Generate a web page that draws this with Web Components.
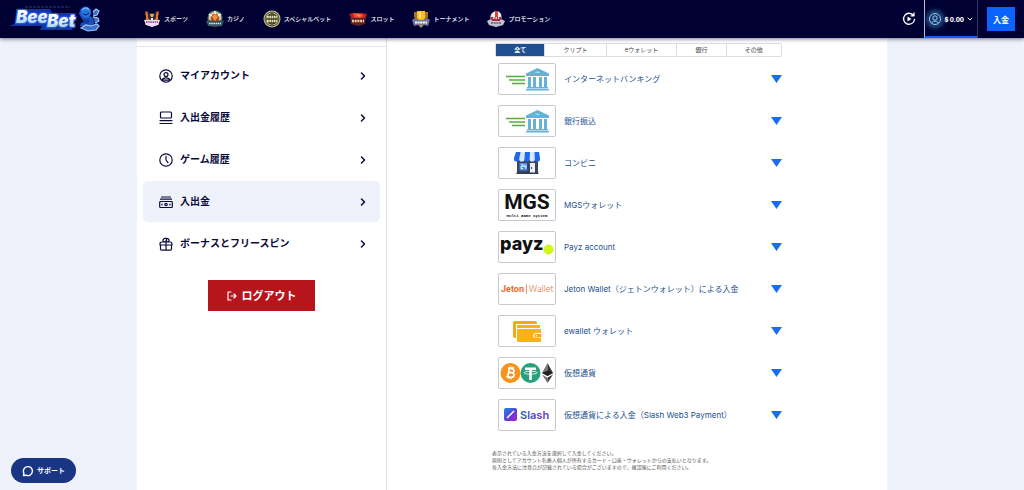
<!DOCTYPE html>
<html lang="ja">
<head>
<meta charset="utf-8">
<meta name="viewport" content="width=device-width, initial-scale=1">
<title>BeeBet 入出金</title>
<style>
html{background:#eff2fa}
body{margin:0;font-family:Inter,"Noto Sans CJK JP",sans-serif;color:#0b0b3b}
</style>
</head>
<body>
<bee-app></bee-app>
<script>
const define = (name, html, setup) => {
  const tpl = document.createElement('template');
  tpl.innerHTML = html;
  customElements.define(name, class extends HTMLElement {
    constructor() {
      super();
      this.attachShadow({ mode: 'open' }).append(tpl.content.cloneNode(true));
    }
    connectedCallback() { if (setup) setup.call(this, this.shadowRoot); }
  });
};

const line = 'fill="none" stroke="currentColor" stroke-linecap="round" stroke-linejoin="round"';

const badges = {
  sports: `<path d="M2 2l3 1 4 4 4-4 3-1-1 5 1 8-4-2H6l-4 2 1-8z" fill="#e07a1f"/><path d="M3 1l11 14M15 1L4 15" stroke="#a9552c" stroke-width="1.5"/><path d="M5 3h8v5l-4 4-4-4z" fill="#252b4e"/><path d="M7 4h4l-1 3H8z" fill="#f0b23a"/><path d="M8 8h2v2H8z" fill="#fff"/><path d="M1 10h16l-2 5-6 2-6-2z" fill="#eadff0"/><path d="M3 12h12" stroke="#783c91" stroke-width="1.6" stroke-dasharray="1.5 .7"/>`,
  casino: `<circle cx="9" cy="8" r="7.500" fill="#588464"/><circle cx="9" cy="8" r="6" fill="#e9dcc5"/><circle cx="9" cy="8" r="4.4" fill="#b9421f"/><path d="M9 3l3 4-3 4-3-4z" fill="#ee933f"/><path d="M3 4l3 2M15 4l-3 2M9 1v3" stroke="#fff" stroke-width="1.4"/><path d="M0 11l3-1 6 1 6-1 3 1-2 5-7 1-7-1z" fill="#35545b"/><path d="M3 13.500h12" stroke="#d8ece3" stroke-width="1.7" stroke-dasharray="1.6 .6"/>`,
  special: `<circle cx="9" cy="9" r="8.5" fill="#cac391"/><circle cx="9" cy="9" r="7" fill="none" stroke="#3d432f"/><circle cx="9" cy="9" r="5.8" fill="#383d2c"/><path d="M4 7h10M4 11h10" stroke="#ece5b0" stroke-width="2.4" stroke-dasharray="1.7 .6"/><path d="M9 2v3M9 13v3" stroke="#5c5c3a" stroke-width="1.5"/>`,
  slot: `<path d="M0 4l5-1h8l5 1-2 5H3z" fill="#bd231c"/><path d="M4 3l8 1 3 2-4 2-6-1z" fill="#ee4e37"/><path d="M7 4l5 1-2 2" fill="#fa9b6a"/><path d="M1 8h16l-1 6-7 2-7-2z" fill="#5c241d"/><path d="M3 11h12" stroke="#edc7a7" stroke-width="2.4" stroke-dasharray="2 .7"/>`,
  tournament: `<path d="M2 2h14v5l-3 4H5L2 7z" fill="#a76f32"/><path d="M5 1h8v7l-3 3H8L5 8z" fill="#ffbd20"/><path d="M7 2h2v6H7z" fill="#ffe986"/><path d="M0 10l3-2 2 2h8l2-2 3 2-2 6-4-1-3 3-3-3-4 1z" fill="#70749d"/><path d="M3 12.5h12" stroke="#fff" stroke-width="2" stroke-dasharray="2 .6"/><path d="M7 15h4l-2 2z" fill="#e48d27"/>`,
  promo: `<circle cx="9" cy="7" r="5.6" fill="#ded9dc"/><path d="M5 4l3-3h3l3 3-2 3H6z" fill="#f6f4f3"/><path d="M8 1h3v6H8z" fill="#d4433d"/><path d="M4 7h10v4H4z" fill="#ac2b35"/><path d="M6 8h6" stroke="#fff" stroke-width="1.5" stroke-dasharray="1.5 1"/><path d="M0 11l4-2 1 2h8l1-2 4 2-2 4-7 2-7-2z" fill="#c5c6d3"/><path d="M4 13h10" stroke="#555b78" stroke-width="1.3" stroke-dasharray="2 .7"/>`
};

const menuIcons = {
  account: `<circle cx="7" cy="7" r="6.2"/><circle cx="7" cy="5.6" r="2"/><path d="M3.2 11.2c.5-3 7.100-3 7.600 0z"/>`,
  history: `<rect x="1.500" y="1" width="11" height="6" rx="1"/><path d="M1 9.700h12M1 12.500h12"/>`,
  clock: `<circle cx="7" cy="7" r="6.2"/><path d="M7 3.400V7l2 2.600"/>`,
  cash: `<path d="M2.500 2h9M1.500 4.200h11"/><rect x=".7" y="6.500" width="12.600" height="6" rx=".8"/><circle cx="7" cy="9.500" r="1.200"/><path d="M3 9v1M11 9v1"/>`,
  gift: `<path d="M3 5h8q2 0 2 2v1H1V7q0-2 2-2zM1.500 8v4q0 1.200 1.200 1.200h8.600q1.200 0 1.200-1.200V8M7 3.500v9.500M7 5q-3.500 0-3-2t3.500-1.500V5M7 5q3.500 0 3-2T6.500 1.500"/>`
};

const brands = {
  bank: `<path d="M7 12.500h19M10 16h16M13 19.500h13" stroke="#58ad3b" stroke-width="1.400"/><g fill="#66b1d9"><path d="M38.500 4L50 9.500V12H27V9.500zM29 13h3v10h-3zM34 13h3v10h-3zM40 13h3v10h-3zM45 13h3v10h-3zM28 23h21v1.500H28zM27 25h23v1.500H27z"/></g><path d="M38.500 7l3 2h-6z" fill="#a9d6ec"/>`,
  store: `<path d="M18 10h21v15H18z" fill="#38475f"/><path d="M17 4h23l1 6v1a2.600 2.600 0 0 1-5.200 0 2.600 2.600 0 0 1-5.200 0 2.600 2.600 0 0 1-5.200 0 2.600 2.600 0 0 1-5.200 0 2.600 2.600 0 0 1-5.200 0v-1z" fill="#1d69ec"/><path d="M21.500 4h4.500l-.6 7a2.600 2.600 0 0 1-5.200 0zM31 4h4.500l.3 7a2.600 2.600 0 0 1-5.200 0z" fill="#dbe8fc"/><rect x="20.500" y="15" width="7.500" height="7.500" fill="#4a8af4"/><path d="M22 16.800h2v1.800h-2v2h2M25 16.500v2.200h2M27 16.500v4.500" fill="none" stroke="#fff" stroke-width=".8"/><path d="M31 15h5v10h-5z" fill="#eceff4"/><path d="M32.500 19v2" stroke="#38475f"/><path d="M17.500 24.500h22V26h-22z" fill="#303a4a"/>`,
  mgs: `<g font-weight="700" fill="#111" text-anchor="middle"><text x="28" y="19" font-family="Roboto,sans-serif" font-size="21">MGS</text><text x="28" y="27" font-family="'Liberation Mono',monospace" font-size="4">Multi Game System</text></g>`,
  payz: `<text x="1" y="18" font-family="Inter,sans-serif" font-weight="800" font-size="18" fill="#111">payz</text><circle cx="49.500" cy="17.500" r="5" fill="#d2f51b"/>`,
  jeton: `<g font-family="Roboto,sans-serif" font-size="9" fill="#ec6c2d"><text x="2" y="18" font-weight="700">Jeton</text><path d="M27 10h.7v10H27z"/><text x="30" y="18" font-weight="300">Wallet</text></g>`,
  wallet: `<path d="M14 7q0-2 2-2h20q2 0 2 2v1H17v14q-3 0-3-2z" fill="#f6a817"/><path d="M18 9h23v3H18zM18 13h24v4h-5q-3 0-3 2.500t3 2.500h5v3q0 1-1 1H19q-1 0-1-1z" fill="#f9b217"/><rect x="35.500" y="18" width="7" height="3.500" rx="1" fill="#f6a817"/><circle cx="37.500" cy="19.700" r=".8" fill="#fff"/>`,
  crypto: `<circle cx="11.500" cy="15" r="10" fill="#f7931a"/><g transform="rotate(13 11.500 15)" fill="none" stroke="#fff" stroke-width="1.700"><path d="M8 10.500h4q2.500 0 2.500 2t-2.500 2H9.500h3.200q2.800 0 2.800 2.300t-2.800 2.300H8M9.500 10.500v8.600M10.500 8.500v2M12.800 8.500v2M10.500 19v2M12.800 19v2"/></g><circle cx="31.500" cy="15" r="10" fill="#26a17b"/><path d="M26 9.500h11v2.600h-4.200V22h-2.600v-9.900H26z" fill="#fff"/><ellipse cx="31.500" cy="14.700" rx="6.500" ry="1.500" fill="none" stroke="#fff" stroke-width=".8"/><path d="M48.500 5L43 15l5.500 3z" fill="#777"/><path d="M48.500 5L54 15l-5.500 3z" fill="#333"/><path d="M43 15l5.500-2.500 5.500 2.500-5.500 3z" fill="#222"/><path d="M43 16.500l5.500 3.200v5.300z" fill="#777"/><path d="M54 16.500l-5.500 3.200v5.300z" fill="#333"/>`,
  slash: `<defs><linearGradient id="g" x1="0" y1="0" x2="1" y2="1"><stop stop-color="#168de2"/><stop offset=".5" stop-color="#5846d8"/><stop offset="1" stop-color="#b316d0"/></linearGradient><linearGradient id="t"><stop stop-color="#2463b8"/><stop offset="1" stop-color="#7931c4"/></linearGradient></defs><rect x="5" y="8" width="13" height="13" rx="2" fill="url(#g)"/><path d="M8 18l7-7" stroke="#fff" stroke-width="1.500"/><text x="21" y="19" font-family="Inter,sans-serif" font-weight="600" font-size="11" fill="url(#t)">Slash</text>`
};

define('nav-item', `<style>
:host{display:block}
a{display:flex;align-items:center;gap:3px;color:#fff;text-decoration:none;font-size:6px;font-weight:500;line-height:10px;white-space:nowrap}
svg{width:18px;height:18px;flex:none}
</style><a href="#"><svg viewBox="0 0 18 18" aria-hidden="true"></svg><slot></slot></a>`,
function (r) { r.querySelector('svg').innerHTML = badges[this.getAttribute('icon')]; });

define('bee-logo', `<style>
:host{display:block}
a{display:block}
svg{display:block;width:92px;height:30px}
text{font:italic 900 17px Inter,sans-serif;paint-order:stroke;stroke:#2855d8;stroke-width:2.5px;stroke-linejoin:round}
</style><a href="#" aria-label="BeeBet"><svg viewBox="0 0 92 30">
<defs><linearGradient id="w" x1="0" y1="0" x2="0" y2="1"><stop offset=".3" stop-color="#fff"/><stop offset="1" stop-color="#8fc6f5"/></linearGradient></defs>
<path d="M7 5h34l2 4h24l-4 17H31l2-4H0l8-3z" fill="#1635a5"/>
<path d="M16 3h45" stroke="#1c2a60" stroke-width="1.500" stroke-dasharray="3 1"/>
<text x="7" y="19" fill="url(#w)">Bee</text><text x="38" y="23" fill="url(#w)">Bet</text>
<path d="M71 6q3-5 8-3l3 3-1 6 3 2 1 5-3 4h-7l-4-1 1-3 4-1-3-3-3-5z" fill="#1d50bd"/>
<circle cx="77" cy="8.500" r="5" fill="#2277df"/><path d="M73 6q4-4 7 0" stroke="#69b9fa" stroke-width="1.500" fill="none"/><path d="M74 10l3 1 3-2" stroke="#071955" fill="none"/>
<path d="M84 8l3-3 3 2-2 4-4 1M84 13l5 1 1 3-4 2M72 24l5-3 5 1 6-2 2 2-3 4-8 1z" stroke="#9fc6f3" stroke-width="1.200" fill="#3b6fd0"/><path d="M75 15l6 1-2 4-5-1z" fill="#123a9c"/>
</svg></a>`);

define('bee-header', `<style>
:host{display:flex;align-items:center;height:38px;padding:0 9px;background:#000033;color:#fff;position:sticky;top:0;z-index:2;box-shadow:0 1px 4px #0000338c;box-sizing:border-box}
nav{display:flex;gap:18px;margin-left:42px;flex:1}
button{font:inherit;color:inherit;border:0;background:none;padding:0;cursor:pointer}
svg{display:block;flex:none}
.replay{margin-right:8px}
.account{display:flex;align-items:center;gap:3px;height:38px;padding:2px 4px 0 3px;border-left:1px solid #b9bdd8;border-right:1px solid #33365f;border-bottom:2px solid #0a60ff;box-sizing:border-box;font-size:6px;font-weight:800;white-space:nowrap}
.avatar{border-radius:50%;box-shadow:0 0 4px 2px #24528a;background:#143568}
.deposit{margin-left:9px;width:28px;height:24px;background:#0a63ff;font-size:8px;font-weight:700}
</style>
<bee-logo></bee-logo>
<nav aria-label="メイン">
<nav-item icon="sports">スポーツ</nav-item><nav-item icon="casino">カジノ</nav-item><nav-item icon="special">スペシャルベット</nav-item><nav-item icon="slot">スロット</nav-item><nav-item icon="tournament">トーナメント</nav-item><nav-item icon="promo">プロモーション</nav-item>
</nav>
<button class="replay" aria-label="最近のゲーム"><svg width="14" height="14" viewBox="0 0 14 14"><path d="M11.500 3.500A5.500 5.500 0 1 0 12.500 7.500M9 3.800h3V1" ${line} stroke-width="1.300"/><path d="M5.500 4.500l4 2.500-4 2.500z" fill="currentColor"/></svg></button>
<button class="account"><svg class="avatar" width="14" height="14" viewBox="0 0 14 14"><g fill="none" stroke="#9ccaf2"><circle cx="7" cy="7" r="5.500"/><circle cx="7" cy="6" r="2.200"/><path d="M3.500 11q3.500-4 7 0"/></g></svg><span>$ 0.00</span><svg width="6" height="6" viewBox="0 0 6 6"><path d="M1 2l2 2 2-2" ${line}/></svg></button>
<button class="deposit">入金</button>`);

define('menu-item', `<style>
:host{display:block;border-radius:5px}
:host([active]){background:#eff2fa}
a{display:flex;align-items:center;gap:7px;height:41px;padding:0 14px 0 16px;color:#0b0b3b;text-decoration:none;font-size:10px;font-weight:700;line-height:14px}
span{flex:1;margin-bottom:1px}
svg{flex:none}
</style><a href="#"><svg class="i" width="14" height="14" viewBox="0 0 14 14" ${line} stroke-width="1.200" aria-hidden="true"></svg><span><slot></slot></span><svg width="6" height="8" viewBox="0 0 6 8" ${line} stroke-width="1.500"><path d="M1.500 1l3 3-3 3"/></svg></a>`,
function (r) {
  r.querySelector('.i').innerHTML = menuIcons[this.getAttribute('icon')];
  if (this.hasAttribute('active')) r.querySelector('a').setAttribute('aria-current', 'page');
});

define('account-menu', `<style>
:host{display:block;border-right:1px solid #dfe1e6}
.top{height:8px;border-bottom:1px solid #e2e4e9}
nav{display:grid;gap:1px;padding:8px 6px 0}
button{display:flex;align-items:center;justify-content:center;gap:5px;width:107px;height:31px;margin:16px auto 24px;border:0;background:#b5151b;color:#fff;font:700 11px/16px Inter,"Noto Sans CJK JP",sans-serif;cursor:pointer}
</style><div class="top"></div>
<nav aria-label="アカウント">
<menu-item icon="account">マイアカウント</menu-item><menu-item icon="history">入出金履歴</menu-item><menu-item icon="clock">ゲーム履歴</menu-item><menu-item icon="cash" active>入出金</menu-item><menu-item icon="gift">ボーナスとフリースピン</menu-item>
</nav>
<button><svg width="10" height="10" viewBox="0 0 10 10" ${line} stroke-width="1.200"><path d="M4 1H1v8h3M4 5h5M7 3l2 2-2 2"/></svg>ログアウト</button>`);

define('method-tabs', `<style>
:host{display:flex;width:287px;margin-left:auto;border:1px solid #dadde2;border-radius:2px;box-sizing:border-box}
button{flex:auto;height:12px;padding:0 18px;border:0;border-right:1px solid #dadde2;background:#fff;color:#444;font:400 6px/12px Inter,"Noto Sans CJK JP",sans-serif;white-space:nowrap;cursor:pointer}
button:last-child{border-right:0}
button[aria-selected=true]{background:#20508f;color:#fff;font-weight:700}
</style><button role="tab" aria-selected="true">全て</button><button role="tab" aria-selected="false">クリプト</button><button role="tab" aria-selected="false">eウォレット</button><button role="tab" aria-selected="false">銀行</button><button role="tab" aria-selected="false">その他</button>`,
function () { this.setAttribute('role', 'tablist'); });

define('payment-method', `<style>
:host{display:block}
button{display:flex;align-items:center;gap:8px;width:100%;padding:0 0 0 6px;border:0;background:none;color:#24508f;font:400 8px/12px Inter,"Noto Sans CJK JP",sans-serif;text-align:left;white-space:nowrap;cursor:pointer}
.card{width:58px;height:32px;border:1px solid #c6c9ce;border-radius:2px;box-sizing:border-box;flex:none}
.card svg{display:block}
.name{flex:1}
</style><button aria-expanded="false"><span class="card"><svg width="56" height="30" viewBox="0 0 56 30" aria-hidden="true"></svg></span><span class="name"><slot></slot></span><svg width="11" height="8" viewBox="0 0 11 8"><path d="M0 0h11L5.500 8z" fill="#1a6df2"/></svg></button>`,
function (r) { r.querySelector('.card svg').innerHTML = brands[this.getAttribute('brand')]; });

define('payment-panel', `<style>
:host{display:block;padding:5px 16px 16px}
.col{max-width:290px;margin:0 auto}
.list{display:grid;gap:10px;margin:6px 0 19px}
p{margin:0;color:#555;font-size:5px;line-height:7px;white-space:nowrap}
</style><div class="col"><method-tabs></method-tabs>
<div class="list">
<payment-method brand="bank">インターネットバンキング</payment-method>
<payment-method brand="bank">銀行振込</payment-method>
<payment-method brand="store">コンビニ</payment-method>
<payment-method brand="mgs">MGSウォレット</payment-method>
<payment-method brand="payz">Payz account</payment-method>
<payment-method brand="jeton">Jeton Wallet（ジェトンウォレット）による入金</payment-method>
<payment-method brand="wallet">ewallet ウォレット</payment-method>
<payment-method brand="crypto">仮想通貨</payment-method>
<payment-method brand="slash">仮想通貨による入金（Slash Web3 Payment）</payment-method>
</div>
<p>表示されている入金方法を選択して入金してください。</p>
<p>原則としてアカウント名義人個人が所有するカード・口座・ウォレットからの支払いとなります。</p>
<p>各入金方法に注意点が記載されている場合がございますので、確認後にご利用ください。</p>
</div>`);

define('support-button', `<style>
:host{position:fixed;left:11px;bottom:7px;z-index:3}
button{display:flex;align-items:center;gap:4px;height:25px;padding:0 11px;border:0;border-radius:13px;background:#1b3585;color:#fff;font:700 7px/12px Inter,"Noto Sans CJK JP",sans-serif;white-space:nowrap;cursor:pointer}
</style><button><svg width="11" height="12" viewBox="0 0 11 12"><path d="M1.500 10.500l.4-2.300A4.500 4.500 0 1 1 4 10.200z" ${line} stroke-width="1.400"/></svg><slot></slot></button>`);

define('bee-app', `<style>
:host{display:flex;flex-direction:column;min-height:100vh}
main{flex:1;display:grid;grid-template-columns:1fr 2fr;width:100%;max-width:750px;margin:0 auto;background:#fff}
</style><bee-header></bee-header><main><account-menu></account-menu><payment-panel></payment-panel></main><support-button>サポート</support-button>`);
</script>
</body>
</html>
